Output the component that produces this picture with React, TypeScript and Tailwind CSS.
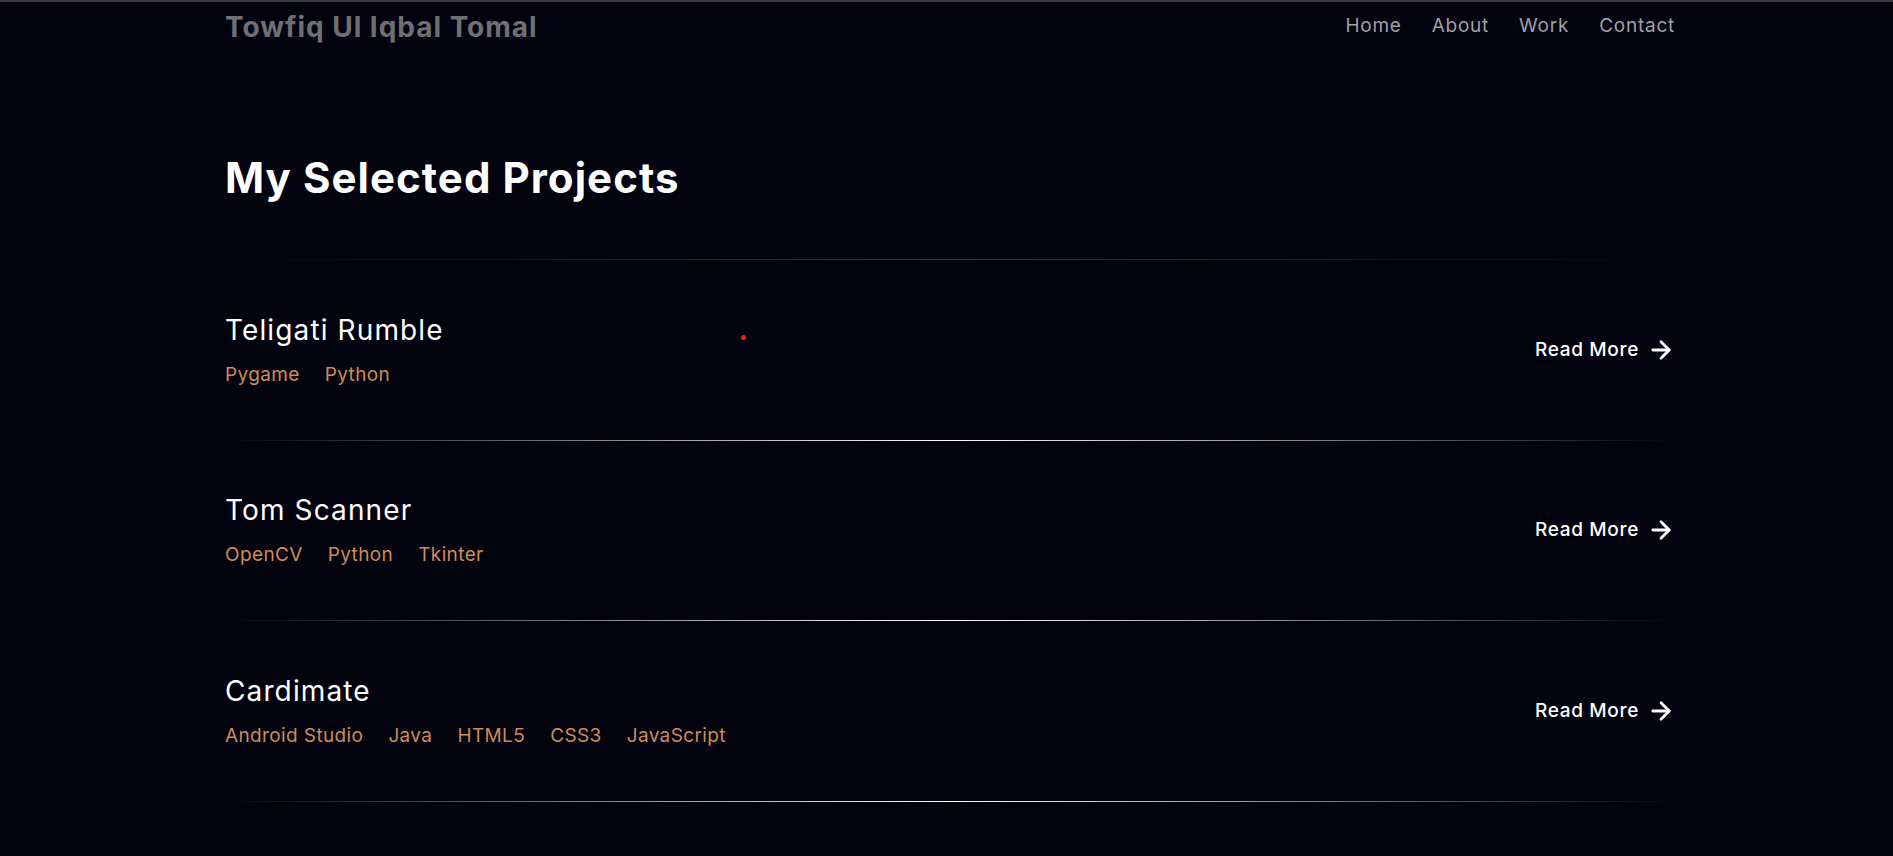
import React from 'react';
import { ArrowRight } from 'lucide-react';

const projects = [
  { name: 'Teligati Rumble', tags: ['Pygame', 'Python'] },
  { name: 'Tom Scanner', tags: ['OpenCV', 'Python', 'Tkinter'] },
  { name: 'Cardimate', tags: ['Android Studio', 'Java', 'HTML5', 'CSS3', 'JavaScript'] },
];

const navLinks = ['Home', 'About', 'Work', 'Contact'];

const Divider: React.FC<{ dim?: boolean }> = ({ dim }) => (
  <div
    className={`h-px w-full bg-gradient-to-r from-transparent to-transparent ${
      dim ? 'via-white/20' : 'via-white'
    }`}
  />
);

const App: React.FC = () => {
  return (
    <div
      className="relative min-h-[856px] bg-[#02030f] border-t-2 border-[#3a3a3e] text-white"
      style={{ fontFamily: 'Inter, "Liberation Sans", sans-serif' }}
    >
      {/* cursor dot */}
      <div className="absolute left-[741px] top-[333px] w-[5px] h-[5px] rounded-full bg-[#e5261f]" />

      <div className="w-[1450px] ml-[225px]">
        {/* Header */}
        <header className="h-[49px] flex items-center justify-between">
          <span className="text-[28px] font-bold text-[#707074] tracking-[0.035em]">
            Towfiq Ul Iqbal Tomal
          </span>
          <nav className="flex items-center gap-[30px] text-[19px] tracking-[0.04em] text-[#a0a0a6]">
            {navLinks.map((link) => (
              <a key={link} href="#">
                {link}
              </a>
            ))}
          </nav>
        </header>

        {/* Title */}
        <h1 className="mt-[102px] text-[42px] leading-[50px] font-bold tracking-[0.025em]">
          My Selected Projects
        </h1>

        {/* Projects */}
        <div className="mt-[56px]">
          <Divider dim />
          {projects.map((project) => (
            <div key={project.name}>
              <div className="h-[179.5px] flex items-center justify-between">
                <div>
                  <h2 className="text-[28px] leading-[36px] tracking-[0.04em]">{project.name}</h2>
                  <div className="mt-[14px] flex gap-[25px] text-[19px] leading-[26px] tracking-[0.02em] text-[#d08b58]">
                    {project.tags.map((tag) => (
                      <span key={tag}>{tag}</span>
                    ))}
                  </div>
                </div>
                <a href="#" className="flex items-center gap-[8px] text-[19px] font-medium tracking-[0.035em]">
                  Read More
                  <ArrowRight className="w-[28px] h-[28px]" strokeWidth={2.4} />
                </a>
              </div>
              <Divider />
            </div>
          ))}
        </div>
      </div>
    </div>
  );
};

export default App;
